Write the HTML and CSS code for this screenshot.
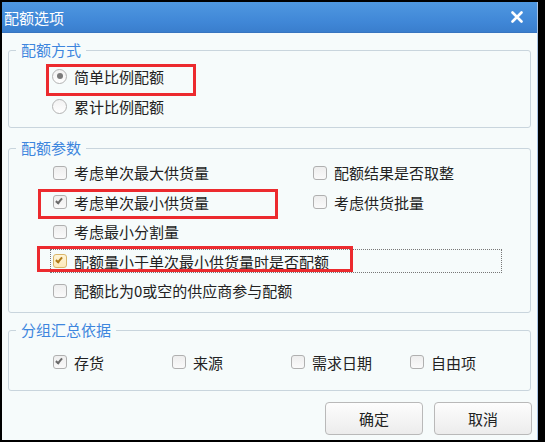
FILE: index.html
```html
<!DOCTYPE html>
<html lang="zh-CN">
<head>
  <meta charset="UTF-8"/>
  <title>配额选项</title>
  <link rel="stylesheet" href="styles.css">
</head>
<body>
  <div class="window">
    <div class="titlebar">
      <span class="title">配额选项</span>
      <svg class="close" width="12" height="12" viewBox="0 0 12 12">
        <path d="M1.5 1.5 L10.5 10.5 M10.5 1.5 L1.5 10.5" stroke="#fff" stroke-width="2.6" stroke-linecap="round"/>
      </svg>
    </div>

    <div class="content">
      <fieldset class="group group-mode">
        <legend>配额方式</legend>
        <div class="group-body">
          <label class="opt"><span class="radio on"></span>简单比例配额</label>
          <label class="opt"><span class="radio"></span>累计比例配额</label>
        </div>
      </fieldset>

      <fieldset class="group group-params">
        <legend>配额参数</legend>
        <div class="group-body param-grid">
          <label class="opt"><span class="check"></span>考虑单次最大供货量</label>
          <label class="opt"><span class="check"></span>配额结果是否取整</label>
          <label class="opt"><span class="check on"></span>考虑单次最小供货量</label>
          <label class="opt"><span class="check"></span>考虑供货批量</label>
          <label class="opt wide"><span class="check"></span>考虑最小分割量</label>
          <label class="opt wide focus"><span class="check on hover"></span>配额量小于单次最小供货量时是否配额</label>
          <label class="opt wide"><span class="check"></span>配额比为0或空的供应商参与配额</label>
        </div>
      </fieldset>

      <fieldset class="group group-sum">
        <legend>分组汇总依据</legend>
        <div class="group-body sum-row">
          <label class="opt"><span class="check on"></span>存货</label>
          <label class="opt"><span class="check"></span>来源</label>
          <label class="opt"><span class="check"></span>需求日期</label>
          <label class="opt"><span class="check"></span>自由项</label>
        </div>
      </fieldset>

      <div class="actions">
        <button class="btn">确定</button>
        <button class="btn">取消</button>
      </div>
    </div>

    <!-- annotation boxes drawn over the dialog -->
    <div class="mark mark-1"></div>
    <div class="mark mark-2"></div>
    <div class="mark mark-3"></div>
  </div>
</body>
</html>
```

FILE: styles.css
```css
/* Reset & Base */
*, *::before, *::after { margin:0; padding:0; box-sizing:border-box; }
html, body { background:#000; }
body {
  font-family: "Noto Sans CJK SC", "Noto Sans", sans-serif;
  font-size: 15px;
  color: #222;
  padding: 2px 0 0 2px;
  height: 442px;
  overflow: hidden;
}

/* Window */
.window {
  position: relative;
  width: 536px;
  height: 438px;
  background: #f6fbfb;
  border-right: 1px solid #a9c3e3;
}
.titlebar {
  height: 31px;
  background: linear-gradient(#4f98e1, #3f86d6 70%, #3a7ecd);
  border-bottom: 1px solid #3775c0;
  display: flex;
  align-items: center;
  justify-content: space-between;
  padding: 0 14px 0 2px;
  color: #fff;
}
.title {
  font-size: 15px;
  line-height: 1;
}
.close { display: block; }

/* Content */
.content {
  padding: 0 6px;
}
.group {
  border: 1px solid #c9d5dd;
  border-radius: 3px;
  width: 523px;
}
.group legend {
  color: #3d86de;
  font-size: 15px;
  line-height: 16px;
  padding: 0 5px;
  margin-left: 7px;
}
.group-mode {
  margin-top: 9px;
  height: 86px;
}
.group-mode .group-body { padding: 3px 0 0 43px; }
.group-params {
  margin-top: 12px;
  height: 173px;
}
.group-params .group-body { padding: 2px 0 0 44px; }
.group-sum {
  margin-top: 9px;
  height: 69px;
}
.group-sum .group-body { padding: 9px 0 0 44px; }

/* Options */
.opt {
  display: flex;
  align-items: center;
  gap: 7px;
  height: 30px;
  white-space: nowrap;
}
.group-params .opt { height: 29.5px; }
.param-grid {
  display: grid;
  grid-template-columns: 260px 1fr;
}
.param-grid .wide { grid-column: 1 / -1; }
.opt.focus {
  width: 450px;
  height: 22px;
  margin: 3.75px 0 3.75px -2px;
  padding-left: 2px;
  outline: 1px dotted #777;
}
.sum-row {
  display: grid;
  grid-template-columns: repeat(4, 119px);
}

.radio {
  width: 15px;
  height: 15px;
  border-radius: 50%;
  border: 1px solid #b3b3b3;
  background: linear-gradient(#f2f2f2, #fff);
  display: flex;
  align-items: center;
  justify-content: center;
}
.radio.on::after {
  content: "";
  width: 6px;
  height: 6px;
  border-radius: 50%;
  background: #7a7a7a;
}
.check {
  position: relative;
  width: 14px;
  height: 14px;
  border-radius: 3px;
  border: 1px solid #b0b0b0;
  background: linear-gradient(#eeeeee, #fafafa);
  flex: none;
}
.check.on::after {
  content: "";
  position: absolute;
  left: 3px;
  top: 1px;
  width: 4px;
  height: 7px;
  border: solid #6a6a6a;
  border-width: 0 2px 2px 0;
  transform: rotate(40deg);
}
.check.hover {
  border-color: #d9b56a;
  background: linear-gradient(#fff4d6, #fde9b8);
}
.check.hover::after { border-color: #b07a18; }

/* Buttons */
.actions {
  display: flex;
  justify-content: flex-end;
  gap: 11px;
  margin: 11px -1px 0 0;
}
.btn {
  width: 98px;
  height: 33px;
  font-family: inherit;
  font-size: 15px;
  color: #222;
  border: 1px solid #b9b9b9;
  border-radius: 4px;
  background: linear-gradient(#fdfdfd, #ececec);
}

/* Red annotation boxes */
.mark {
  position: absolute;
  border: 3px solid #ec2a2e;
}
.mark-1 { left: 44px; top: 62px; width: 150px; height: 32px; }
.mark-2 { left: 36px; top: 187px; width: 240px; height: 30px; }
.mark-3 { left: 35px; top: 244px; width: 316px; height: 26px; }
```
